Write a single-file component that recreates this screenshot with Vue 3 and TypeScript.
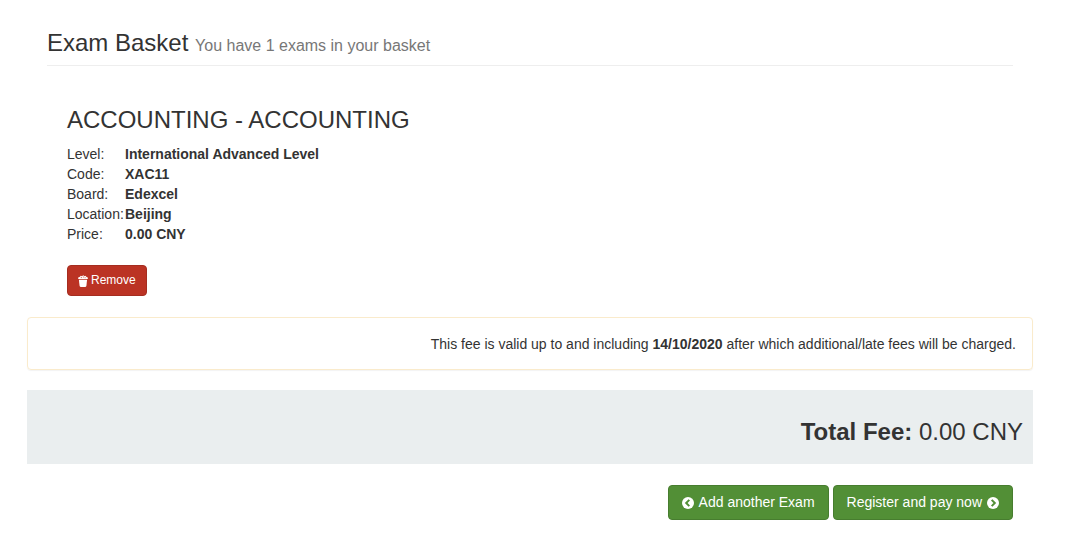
<script setup lang="ts">
import { ref, computed } from 'vue'

interface Exam {
  title: string
  details: { label: string; value: string }[]
}

const exams = ref<Exam[]>([
  {
    title: 'ACCOUNTING - ACCOUNTING',
    details: [
      { label: 'Level:', value: 'International Advanced Level' },
      { label: 'Code:', value: 'XAC11' },
      { label: 'Board:', value: 'Edexcel' },
      { label: 'Location:', value: 'Beijing' },
      { label: 'Price:', value: '0.00 CNY' },
    ],
  },
])

const summary = computed(() => `You have ${exams.value.length} exams in your basket`)

function remove(index: number) {
  exams.value.splice(index, 1)
}
</script>

<template>
  <main class="basket">
    <h1 class="heading">Exam Basket <small>{{ summary }}</small></h1>

    <section v-for="(exam, i) in exams" :key="exam.title" class="exam">
      <h2>{{ exam.title }}</h2>
      <dl>
        <template v-for="item in exam.details" :key="item.label">
          <dt>{{ item.label }}</dt>
          <dd>{{ item.value }}</dd>
        </template>
      </dl>
      <button type="button" class="btn btn-remove" @click="remove(i)">
        <svg class="bin" viewBox="0 0 10 12" aria-hidden="true">
          <path d="M1.6 2.1 2.8.8 4 1.3 5.2.2 6.5 1.2 7.5.8 8.5 2.1 9.8 2.5V4.1H.2V2.5Z" fill="#fff" />
          <path d="M.9 4.8H9.1L8.4 10.7Q8.2 11.9 7 11.9H3Q1.8 11.9 1.6 10.7Z" fill="#fff" />
          <path d="M2.8 2.6H3.8M4.9 2H5.8M6.7 2.7H7.5" stroke="#bb3324" stroke-width=".8" />
        </svg>
        Remove
      </button>
    </section>

    <p class="notice">
      This fee is valid up to and including <strong>14/10/2020</strong> after which additional/late fees will be charged.
    </p>

    <div class="total"><strong>Total Fee:</strong> 0.00 CNY</div>

    <div class="actions">
      <button type="button" class="btn btn-go">
        <svg class="arrow" viewBox="0 0 12 12" aria-hidden="true">
          <circle cx="6" cy="6" r="6" fill="#fff" />
          <path d="M7.3 2.9 4.2 6 7.3 9.1" fill="none" stroke="#528f36" stroke-width="2" />
        </svg>
        Add another Exam
      </button>
      <button type="button" class="btn btn-go">
        Register and pay now
        <svg class="arrow" viewBox="0 0 12 12" aria-hidden="true">
          <circle cx="6" cy="6" r="6" fill="#fff" />
          <path d="M4.7 2.9 7.8 6 4.7 9.1" fill="none" stroke="#528f36" stroke-width="2" />
        </svg>
      </button>
    </div>
  </main>
</template>

<style>
body {
  margin: 0;
  background: #fff;
}
</style>

<style scoped>
.basket {
  padding: 29px 47px 24px 27px;
  color: #333;
  font: 14px/20px "Liberation Sans", Arial, sans-serif;
}

.heading {
  margin: 0 20px 40px;
  padding-bottom: 8px;
  border-bottom: 1px solid #eee;
  font-size: 24px;
  font-weight: 400;
  line-height: 28px;
}

.heading small {
  color: #777;
  font-size: 16px;
  line-height: 20px;
}

.exam {
  margin: 0 40px 21px;
}

.exam h2 {
  margin: 0 0 10px;
  font-size: 24px;
  font-weight: 400;
  line-height: 28px;
}

dl {
  display: grid;
  grid-template-columns: 58px 1fr;
  margin: 0 0 21px;
}

dd {
  margin: 0;
  font-weight: 700;
}

.btn {
  display: inline-flex;
  align-items: center;
  gap: 5px;
  border: 1px solid;
  border-radius: 4px;
  color: #fff;
  font-family: inherit;
  cursor: pointer;
}

.btn-remove {
  gap: 3px;
  padding: 5px 10px;
  border-color: #a52d20;
  background: #bb3324;
  font-size: 12px;
  line-height: 19px;
}

.bin {
  width: 10px;
  height: 12px;
}

.notice {
  margin: 0 0 20px;
  padding: 16px 16px 15px;
  border: 1px solid #faebcc;
  border-radius: 4px;
  box-shadow: 0 1px 1px rgba(0, 0, 0, 0.05);
  text-align: right;
}

.total {
  margin-bottom: 21px;
  padding: 28px 10px 18px;
  background: #eaeeef;
  font-size: 24px;
  line-height: 28px;
  text-align: right;
}

.actions {
  display: flex;
  justify-content: flex-end;
  gap: 4px;
  margin-right: 20px;
}

.btn-go {
  padding: 6px 13px;
  border-color: #477d2f;
  background: #528f36;
  font-size: 14px;
  line-height: 21px;
}

.arrow {
  width: 12px;
  height: 12px;
}
</style>
